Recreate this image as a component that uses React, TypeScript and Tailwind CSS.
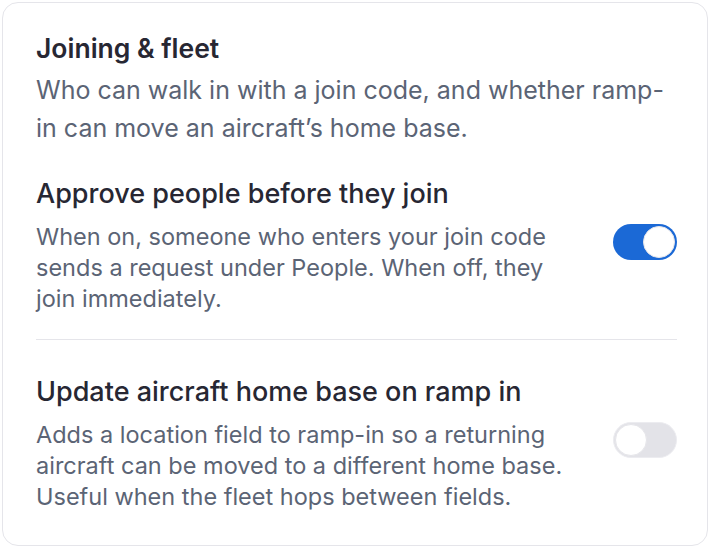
import React, { useState } from "react";

type Setting = {
  id: string;
  title: string;
  body: string;
  on: boolean;
};

const initial: Setting[] = [
  {
    id: "approve",
    title: "Approve people before they join",
    body: "When on, someone who enters your join code sends a request under People. When off, they join immediately.",
    on: true,
  },
  {
    id: "homebase",
    title: "Update aircraft home base on ramp in",
    body: "Adds a location field to ramp-in so a returning aircraft can be moved to a different home base. Useful when the fleet hops between fields.",
    on: false,
  },
];

function Toggle({ on, onChange }: { on: boolean; onChange: () => void }) {
  return (
    <button
      type="button"
      role="switch"
      aria-checked={on}
      onClick={onChange}
      className={
        on
          ? "flex h-[36px] w-[64px] shrink-0 items-center justify-end rounded-full bg-[#1b69d6] p-[2px]"
          : "flex h-[36px] w-[64px] shrink-0 items-center justify-start rounded-full border border-[#ececf0] bg-[#e3e3e8] p-[1px]"
      }
    >
      <span className="h-[32px] w-[32px] rounded-full border border-[#e6e6ea] bg-white" />
    </button>
  );
}

export default function App() {
  const [items, setItems] = useState(initial);

  const flip = (id: string) =>
    setItems((xs) => xs.map((x) => (x.id === id ? { ...x, on: !x.on } : x)));

  return (
    <div className="p-[2px] font-['Inter',sans-serif] bg-white">
      <div className="h-[544px] rounded-[16px] border border-[#e5e5ea] bg-white pl-[33px] pr-[30px] pt-[29px]">
        <h2 className="text-[26.5px] font-semibold leading-[32px] text-[#272733]">Joining &amp; fleet</h2>
        <p className="mt-[7px] text-[25px] leading-[38px] text-[#5b6475]">
          Who can walk in with a join code, and whether ramp-in can move an aircraft’s home base.
        </p>

        <div className="mt-[30px] flex flex-col">
          {items.map((s, i) => (
            <div
              key={s.id}
              className={i > 0 ? "border-t border-[#e5e5ea] pt-[35px]" : "pb-[25px]"}
            >
              <div className="flex items-start gap-[36px]">
                <div className="flex-1">
                  <h3 className="text-[27px] font-medium leading-[34px] text-[#272733]">{s.title}</h3>
                  <p className="mt-[10px] text-[23.5px] leading-[31px] text-[#5b6475]">{s.body}</p>
                </div>
                <div className="pt-[47px]">
                  <Toggle on={s.on} onChange={() => flip(s.id)} />
                </div>
              </div>
            </div>
          ))}
        </div>
      </div>
    </div>
  );
}
